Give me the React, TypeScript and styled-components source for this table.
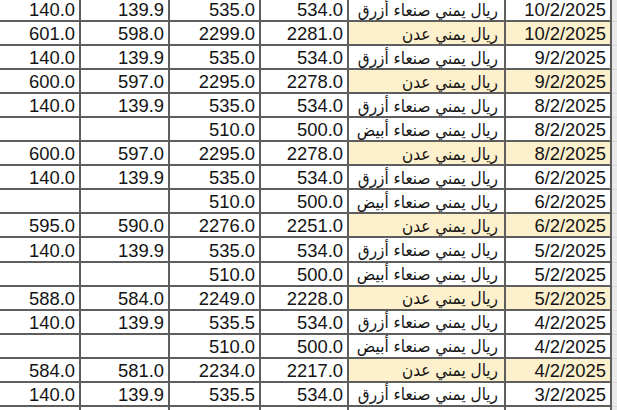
import React from 'react';
import styled, { createGlobalStyle } from 'styled-components';

const GlobalStyle = createGlobalStyle`
  html, body {
    margin: 0;
    padding: 0;
    background: #ffffff;
    overflow: hidden;
  }
`;

const Sheet = styled.div`
  display: grid;
  grid-template-columns: 81px 89px 91px 88px 157px 106px 5px;
  grid-auto-rows: 24.06px;
  margin-top: -2px;
  width: 617px;
  height: 412px;
  overflow: hidden;
  color: #141414;
`;

const Cell = styled.div<{ $yellow?: boolean; $arabic?: boolean }>`
  display: flex;
  align-items: center;
  justify-content: flex-end;
  padding: 2px ${p => (p.$arabic ? '6px' : '4px')} 0 0;
  border-right: 2px solid #5e5e5e;
  border-bottom: 2px solid #5e5e5e;
  background: ${p => (p.$yellow ? '#fdf0cc' : '#ffffff')};
  font-size: ${p => (p.$arabic ? '17px' : '18.4px')};
  font-family: ${p =>
    p.$arabic
      ? "'DejaVu Sans Condensed', 'DejaVu Sans', sans-serif"
      : "'Liberation Sans', Arial, sans-serif"};
  font-stretch: ${p => (p.$arabic ? 'condensed' : 'normal')};
  white-space: nowrap;
  overflow: hidden;
  box-sizing: border-box;
`;

const ArabicText = styled.span`
  direction: rtl;
  unicode-bidi: isolate;
  line-height: 1;
`;

const Gutter = styled.div`
  background: #e9e9e9;
  border-bottom: 1px solid #d6d6d6;
`;

const BLUE = 'ريال يمني صنعاء أزرق';
const WHITE = 'ريال يمني صنعاء أبيض';
const ADEN = 'ريال يمني عدن';

type Row = [string, string, string, string, string, string];

const rows: Row[] = [
  ['140.0', '139.9', '535.0', '534.0', BLUE, '10/2/2025'],
  ['601.0', '598.0', '2299.0', '2281.0', ADEN, '10/2/2025'],
  ['140.0', '139.9', '535.0', '534.0', BLUE, '9/2/2025'],
  ['600.0', '597.0', '2295.0', '2278.0', ADEN, '9/2/2025'],
  ['140.0', '139.9', '535.0', '534.0', BLUE, '8/2/2025'],
  ['', '', '510.0', '500.0', WHITE, '8/2/2025'],
  ['600.0', '597.0', '2295.0', '2278.0', ADEN, '8/2/2025'],
  ['140.0', '139.9', '535.0', '534.0', BLUE, '6/2/2025'],
  ['', '', '510.0', '500.0', WHITE, '6/2/2025'],
  ['595.0', '590.0', '2276.0', '2251.0', ADEN, '6/2/2025'],
  ['140.0', '139.9', '535.0', '534.0', BLUE, '5/2/2025'],
  ['', '', '510.0', '500.0', WHITE, '5/2/2025'],
  ['588.0', '584.0', '2249.0', '2228.0', ADEN, '5/2/2025'],
  ['140.0', '139.9', '535.5', '534.0', BLUE, '4/2/2025'],
  ['', '', '510.0', '500.0', WHITE, '4/2/2025'],
  ['584.0', '581.0', '2234.0', '2217.0', ADEN, '4/2/2025'],
  ['140.0', '139.9', '535.5', '534.0', BLUE, '3/2/2025'],
  ['', '', '', '', '', ''],
];

export default function App() {
  return (
    <>
      <GlobalStyle />
      <Sheet>
        {rows.map((r, i) => {
          const yellow = r[4] === ADEN;
          return (
            <React.Fragment key={i}>
              <Cell>{r[0]}</Cell>
              <Cell>{r[1]}</Cell>
              <Cell>{r[2]}</Cell>
              <Cell>{r[3]}</Cell>
              <Cell $arabic $yellow={yellow}>
                <ArabicText>{r[4]}</ArabicText>
              </Cell>
              <Cell $yellow={yellow}>{r[5]}</Cell>
              <Gutter />
            </React.Fragment>
          );
        })}
      </Sheet>
    </>
  );
}
